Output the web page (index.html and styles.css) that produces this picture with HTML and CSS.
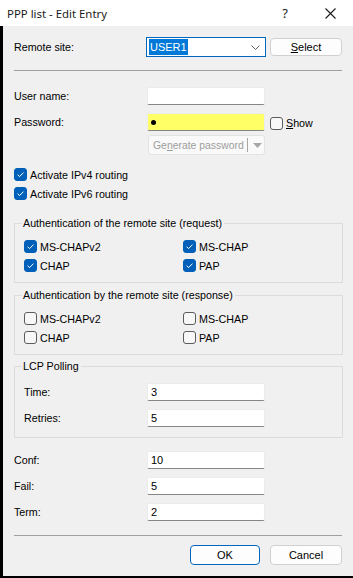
FILE: index.html
```html
<!DOCTYPE html>
<html lang="en">
<head>
    <meta charset="UTF-8">
    <meta name="viewport" content="width=device-width, initial-scale=1.0">
    <title>PPP list - Edit Entry</title>
    <link rel="stylesheet" href="styles.css">
</head>
<body>
    <div class="dialog">
        <div class="titlebar">
            <span class="title">PPP list - Edit Entry</span>
            <span class="title-help">?</span>
            <span class="title-close">
                <svg width="11" height="11" viewBox="0 0 11 11"><path d="M0.5 0.5L10.5 10.5M10.5 0.5L0.5 10.5" stroke="#1c1c1c" stroke-width="1.1" fill="none"/></svg>
            </span>
        </div>

        <div class="content">
            <div class="row row-remote">
                <span class="label">Remote site:</span>
                <div class="combo">
                    <span class="combo-value">USER1</span>
                    <svg class="chevron" width="9" height="5" viewBox="0 0 9 5"><path d="M0.5 0.5L4.5 4.5L8.5 0.5" stroke="#606060" fill="none"/></svg>
                </div>
                <button class="btn btn-select"><u>S</u>elect</button>
            </div>

            <div class="separator sep-top"></div>

            <div class="row row-user">
                <span class="label">User name:</span>
                <div class="field"></div>
            </div>

            <div class="row row-pass">
                <span class="label">Password:</span>
                <div class="field field-yellow"><span class="dot"></span></div>
                <span class="check show-check"><span class="box"></span><span><u>S</u>how</span></span>
            </div>

            <div class="row row-gen">
                <span class="label"></span>
                <div class="split-btn">
                    <span class="split-text">Ge<u>n</u>erate password</span>
                    <span class="split-divider"></span>
                    <svg class="split-arrow" width="9" height="5" viewBox="0 0 9 5"><path d="M0 0H9L4.5 5Z" fill="#a6a6a6"/></svg>
                </div>
            </div>

            <div class="check check-line first-check">
                <span class="box checked"><svg viewBox="0 0 13 13"><path d="M3.6 6.7L5.6 8.6L9.5 4.6" stroke="#fff" stroke-width="1" fill="none"/></svg></span>
                <span>Activate IPv4 routing</span>
            </div>
            <div class="check check-line">
                <span class="box checked"><svg viewBox="0 0 13 13"><path d="M3.6 6.7L5.6 8.6L9.5 4.6" stroke="#fff" stroke-width="1" fill="none"/></svg></span>
                <span>Activate IPv6 routing</span>
            </div>

            <div class="group group-request">
                <div class="legend">Authentication of the remote site (request)</div>
                <div class="check-grid">
                    <div class="check"><span class="box checked"><svg viewBox="0 0 13 13"><path d="M3.6 6.7L5.6 8.6L9.5 4.6" stroke="#fff" stroke-width="1" fill="none"/></svg></span><span>MS-CHAPv2</span></div>
                    <div class="check"><span class="box checked"><svg viewBox="0 0 13 13"><path d="M3.6 6.7L5.6 8.6L9.5 4.6" stroke="#fff" stroke-width="1" fill="none"/></svg></span><span>MS-CHAP</span></div>
                    <div class="check"><span class="box checked"><svg viewBox="0 0 13 13"><path d="M3.6 6.7L5.6 8.6L9.5 4.6" stroke="#fff" stroke-width="1" fill="none"/></svg></span><span>CHAP</span></div>
                    <div class="check"><span class="box checked"><svg viewBox="0 0 13 13"><path d="M3.6 6.7L5.6 8.6L9.5 4.6" stroke="#fff" stroke-width="1" fill="none"/></svg></span><span>PAP</span></div>
                </div>
            </div>

            <div class="group group-response">
                <div class="legend">Authentication by the remote site (response)</div>
                <div class="check-grid">
                    <div class="check"><span class="box"></span><span>MS-CHAPv2</span></div>
                    <div class="check"><span class="box"></span><span>MS-CHAP</span></div>
                    <div class="check"><span class="box"></span><span>CHAP</span></div>
                    <div class="check"><span class="box"></span><span>PAP</span></div>
                </div>
            </div>

            <div class="group group-lcp">
                <div class="legend">LCP Polling</div>
                <div class="row row-lcp-first">
                    <span class="label label-inner">Time:</span>
                    <div class="field">3</div>
                </div>
                <div class="row row-gap">
                    <span class="label label-inner">Retries:</span>
                    <div class="field">5</div>
                </div>
            </div>

            <div class="row row-conf">
                <span class="label">Conf:</span>
                <div class="field">10</div>
            </div>
            <div class="row row-gap">
                <span class="label">Fail:</span>
                <div class="field">5</div>
            </div>
            <div class="row row-gap">
                <span class="label">Term:</span>
                <div class="field">2</div>
            </div>

            <div class="separator sep-bottom"></div>

            <div class="buttons">
                <button class="btn btn-ok">OK</button>
                <button class="btn btn-cancel">Cancel</button>
            </div>
        </div>
    </div>
</body>
</html>
```

FILE: styles.css
```css
* {
    margin: 0;
    padding: 0;
    box-sizing: border-box;
}

body {
    width: 353px;
    height: 578px;
    overflow: hidden;
    background: #000;
    font-family: 'Liberation Sans', Arial, sans-serif;
    font-size: 10.7px;
    color: #000;
}

.dialog {
    height: 576px;
    background: #f0f0f0;
    display: flex;
    flex-direction: column;
}

/* title bar */
.titlebar {
    height: 26px;
    flex: none;
    background: #fff;
    display: flex;
    align-items: center;
    padding-left: 7px;
}

.title {
    flex: 1;
    font-family: 'Noto Sans', sans-serif;
    font-size: 11.4px;
    color: #1a1a1a;
    padding-top: 1px;
}

.title-help {
    width: 46px;
    text-align: center;
    font-family: 'Noto Sans', sans-serif;
    font-size: 13px;
    color: #1a1a1a;
}

.title-close {
    width: 45px;
    display: flex;
    justify-content: center;
    align-items: center;
}

/* body of the dialog */
.content {
    flex: 1;
    border-left: 3px solid #000;
    padding: 11px 10px 0 11px;
}

.row {
    display: flex;
    align-items: center;
}

.label {
    width: 133px;
    flex: none;
}

.label-inner {
    width: 123px;
}

.row-remote {
    height: 20px;
}

.combo {
    width: 120px;
    height: 20px;
    margin-left: -1px;
    border: 1px solid #0067c0;
    background: #fff;
    display: flex;
    align-items: center;
    padding-left: 2px;
}

.combo-value {
    background: #0078d7;
    color: #fff;
    line-height: 16px;
    padding: 0 1px;
    font-size: 11px;
}

.chevron {
    margin-left: auto;
    margin-right: 5px;
}

.btn {
    font-family: 'Liberation Sans', Arial, sans-serif;
    font-size: 11px;
    color: #000;
    background: #fdfdfd;
    border: 1px solid #d0d0d0;
    border-radius: 4px;
    height: 20px;
}

.btn-select {
    width: 72px;
    height: 18px;
    margin-left: 4px;
}

.separator {
    height: 1px;
    background: #a0a0a0;
    margin-right: 1px;
}

.sep-top {
    margin-top: 13px;
}

.field {
    width: 118px;
    height: 18px;
    flex: none;
    background: #fff;
    border: 1px solid #ebebeb;
    border-bottom-color: #868686;
    border-radius: 2px;
    padding-left: 3px;
    line-height: 16px;
    font-size: 11px;
    display: flex;
    align-items: center;
}

.field-yellow {
    background: #ffff66;
}

.dot {
    width: 5px;
    height: 5px;
    border-radius: 50%;
    background: #000;
}

.row-user {
    margin-top: 16px;
}

.row-pass {
    margin-top: 8px;
}

.row-gen {
    margin-top: 4px;
}

.split-btn {
    width: 117px;
    height: 20px;
    flex: none;
    margin-left: 1px;
    border: 1px solid #e3e3e3;
    border-radius: 3px;
    background: #f9f9f9;
    display: flex;
    align-items: center;
    padding-left: 4px;
    color: #9d9d9d;
    font-size: 10.4px;
}

.split-text {
    white-space: nowrap;
    flex: none;
}

.split-divider {
    width: 1px;
    height: 14px;
    flex: none;
    background: #a6a6a6;
    margin-left: 3px;
}

.split-arrow {
    flex: none;
    margin-left: 5px;
}

/* checkboxes */
.check {
    display: flex;
    align-items: center;
    gap: 3px;
    white-space: nowrap;
}

.box {
    width: 13px;
    height: 13px;
    flex: none;
    border: 1px solid #5c5c5c;
    border-radius: 3px;
    background: #f7f7f7;
}

.box.checked {
    background: #005fb8;
    border-color: #005fb8;
}

.box svg {
    display: block;
    width: 13px;
    height: 13px;
    margin: -1px;
}

.show-check {
    margin-left: 5px;
    margin-top: 2px;
}

.check-line {
    height: 19px;
}

.first-check {
    margin-top: 10px;
}

/* group boxes */
.group {
    border: 1px solid #dcdcdc;
    padding: 0 9px 7px;
}

.legend {
    display: table;
    margin: -7px 0 0 -2px;
    padding: 0 2px 0 1px;
    background: #f0f0f0;
    line-height: 13px;
}

.check-grid {
    display: grid;
    grid-template-columns: 159px 1fr;
    grid-auto-rows: 19px;
    margin-top: 7px;
}

.group-request {
    margin-top: 20px;
}

.group-response {
    margin-top: 12px;
}

.group-lcp {
    margin-top: 11px;
    padding-bottom: 10px;
}

.row-lcp-first {
    margin-top: 10px;
}

.row-gap {
    margin-top: 8px;
}

.row-conf {
    margin-top: 13px;
}

.sep-bottom {
    margin-top: 14px;
}

.buttons {
    display: flex;
    justify-content: flex-end;
    gap: 10px;
    margin-top: 9px;
    margin-right: 1px;
}

.btn-ok {
    width: 70px;
    border-color: #0067c0;
}

.btn-cancel {
    width: 72px;
}
```
